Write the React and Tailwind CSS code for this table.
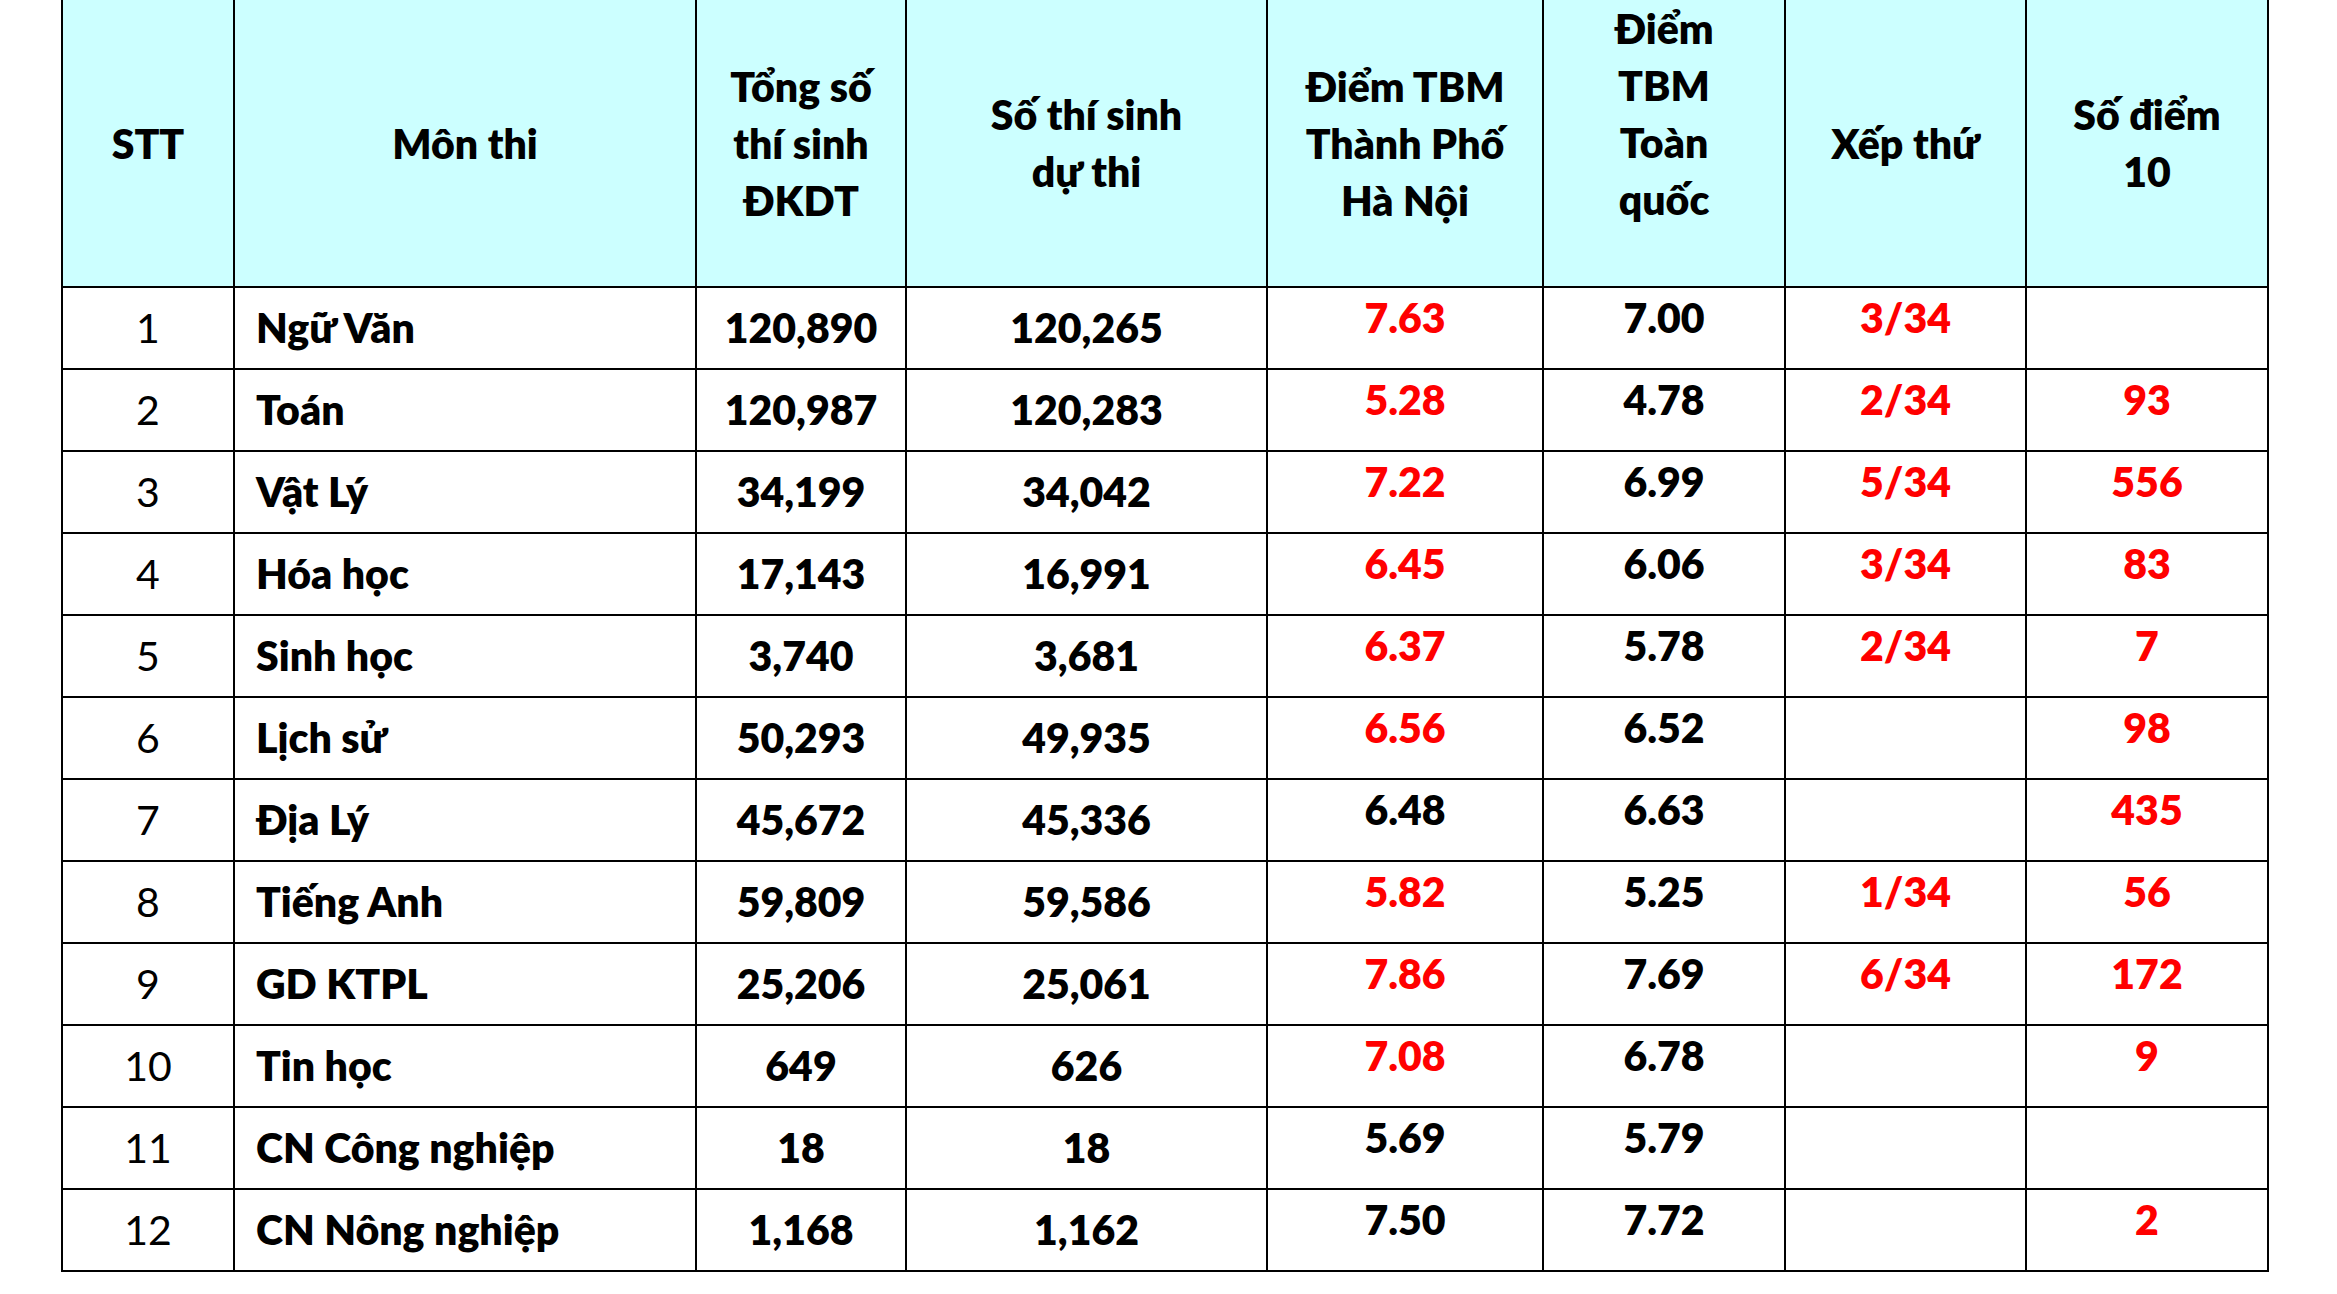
const cols = [172, 462, 210, 361, 276, 242, 241, 242]

const headers = [
    ["STT"],
    ["Môn thi"],
    ["Tổng số", "thí sinh", "ĐKDT"],
    ["Số thí sinh", "dự thi"],
    ["Điểm TBM", "Thành Phố", "Hà Nội"],
    ["Điểm", "TBM", "Toàn", "quốc"],
    ["Xếp thứ"],
    ["Số điểm", "10"],
]

// [stt, môn, tổng, dự thi, điểm HN, HN đỏ?, toàn quốc, xếp thứ, số điểm 10]
const rows = [
    [1, "Ngữ Văn", "120,890", "120,265", "7.63", true, "7.00", "3/34", ""],
    [2, "Toán", "120,987", "120,283", "5.28", true, "4.78", "2/34", "93"],
    [3, "Vật Lý", "34,199", "34,042", "7.22", true, "6.99", "5/34", "556"],
    [4, "Hóa học", "17,143", "16,991", "6.45", true, "6.06", "3/34", "83"],
    [5, "Sinh học", "3,740", "3,681", "6.37", true, "5.78", "2/34", "7"],
    [6, "Lịch sử", "50,293", "49,935", "6.56", true, "6.52", "", "98"],
    [7, "Địa Lý", "45,672", "45,336", "6.48", false, "6.63", "", "435"],
    [8, "Tiếng Anh", "59,809", "59,586", "5.82", true, "5.25", "1/34", "56"],
    [9, "GD KTPL", "25,206", "25,061", "7.86", true, "7.69", "6/34", "172"],
    [10, "Tin học", "649", "626", "7.08", true, "6.78", "", "9"],
    [11, "CN Công nghiệp", "18", "18", "5.69", false, "5.79", "", ""],
    [12, "CN Nông nghiệp", "1,168", "1,162", "7.50", false, "7.72", "", "2"],
]

export default function App() {
    return (
        <div className="w-[2337px] h-[1294px] bg-white overflow-hidden pl-[61px] font-['Lato','Noto_Sans',sans-serif] text-black">
            <table className="table-fixed border-collapse w-[2207px] text-[41px]">
                <colgroup>
                    {cols.map((w, i) => <col key={i} style={{ width: w }} />)}
                </colgroup>
                <thead>
                    <tr className="h-[287px] bg-[#ccffff]">
                        {headers.map((lines, i) => (
                            <th key={i} className={"border-2 border-t-0 border-black font-extrabold text-center align-middle leading-[57px] px-0 pt-0 " + (lines.length === 4 ? "pb-[58px]" : "pb-0")}>
                                {lines.map((l, j) => <div key={j}>{l}</div>)}
                            </th>
                        ))}
                    </tr>
                </thead>
                <tbody className="leading-[48px]">
                    {rows.map(r => (
                        <tr key={r[0]} className="h-[82px]">
                            <td className="border-2 border-black text-center font-normal p-0">{r[0]}</td>
                            <td className="border-2 border-black text-left font-extrabold pl-[21px] py-0">{r[1]}</td>
                            <td className="border-2 border-black text-center font-extrabold p-0">{r[2]}</td>
                            <td className="border-2 border-black text-center font-extrabold p-0">{r[3]}</td>
                            <td className={"border-2 border-black text-center font-extrabold pt-0 pb-[20px] " + (r[5] ? "text-[#ff0000]" : "text-black")}>{r[4]}</td>
                            <td className="border-2 border-black text-center font-extrabold pt-0 pb-[20px]">{r[6]}</td>
                            <td className="border-2 border-black text-center font-extrabold pt-0 pb-[20px] text-[#ff0000]">{r[7]}</td>
                            <td className="border-2 border-black text-center font-extrabold pt-0 pb-[20px] text-[#ff0000]">{r[8]}</td>
                        </tr>
                    ))}
                </tbody>
            </table>
        </div>
    )
}
